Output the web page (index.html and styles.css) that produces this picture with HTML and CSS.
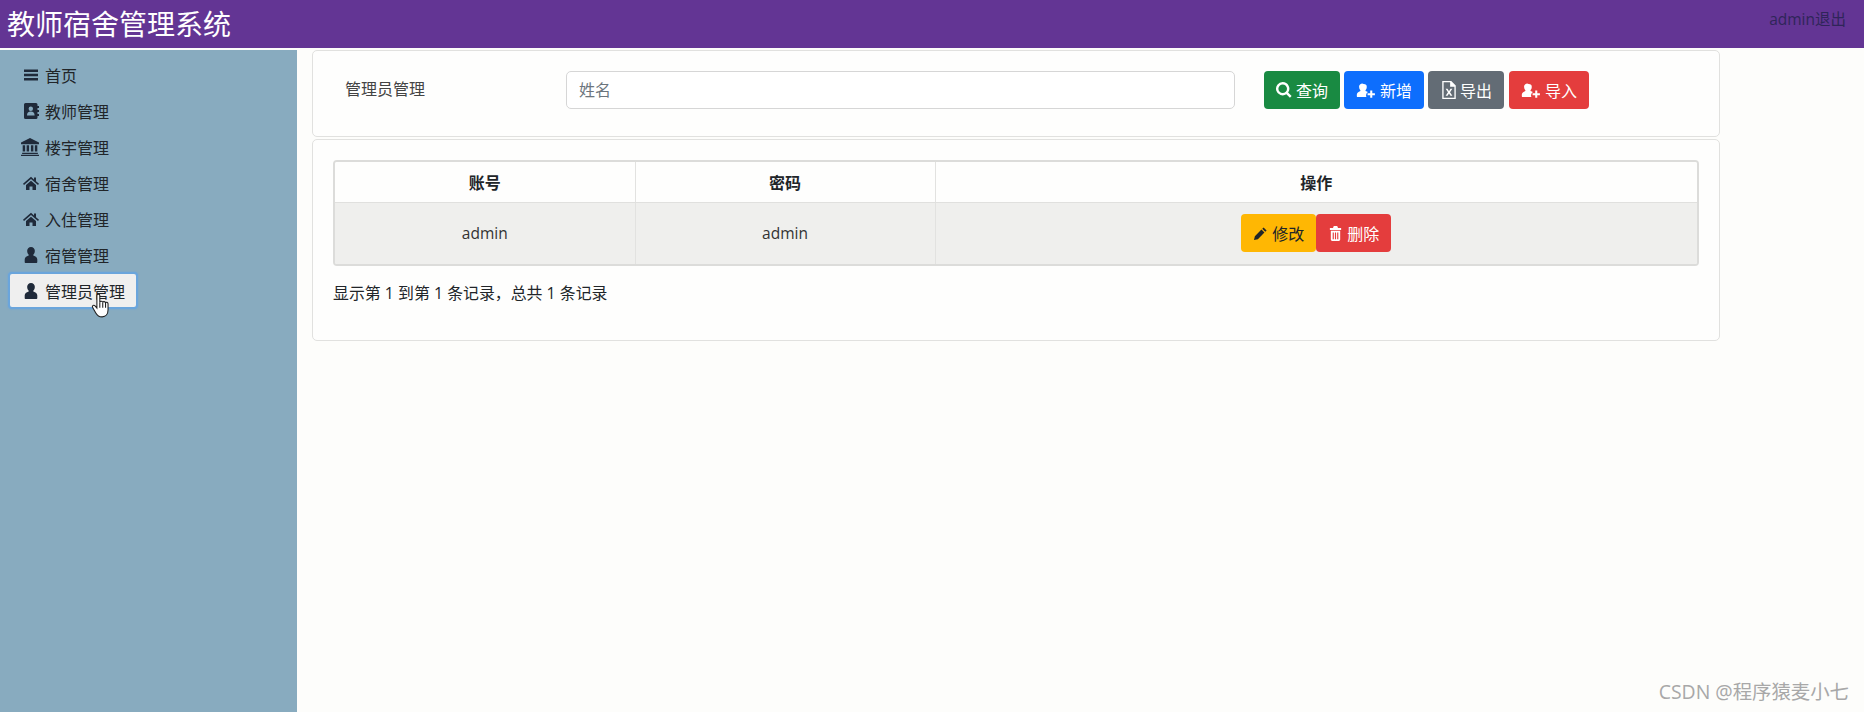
FILE: index.html
```html
<!DOCTYPE html>
<html lang="zh-CN">
<head>
    <meta charset="UTF-8">
    <title>教师宿舍管理系统</title>
    <link rel="stylesheet" href="styles.css">
</head>
<body>
    <svg class="icon-defs" width="0" height="0">
        <symbol id="i-menu" viewBox="0 0 16 16"><path d="M1 2.500h14v2.400H1zM1 6.800h14v2.400H1zM1 11.100h14v2.400H1z"/></symbol>
        <symbol id="i-book" viewBox="0 0 16 16"><path fill-rule="evenodd" d="M2.500 0H13a1.500 1.500 0 0 1 1.500 1.500V3H16v2h-1.500v2H16v2h-1.500v2H16v2h-1.500v1.500A1.500 1.500 0 0 1 13 16H2.500A1.500 1.500 0 0 1 1 14.500v-13A1.500 1.500 0 0 1 2.500 0zM7.800 3.500a2.200 2.200 0 1 0 0 4.400 2.200 2.200 0 0 0 0-4.400zM4 12.500h7.600c0-2.600-1.300-4-3.800-4S4 9.900 4 12.500z"/></symbol>
        <symbol id="i-bank" viewBox="0 0 16 16"><path d="M8 0l8 4v1.500H0V4zM1.500 6.500h2.200v5.500H1.500zM5 6.500h2.200v5.500H5zM8.800 6.500H11v5.500H8.800zM12.300 6.500h2.200v5.500h-2.200zM1 13h14v1.300H1zM0 14.800h16V16H0z"/></symbol>
        <symbol id="i-home" viewBox="0 0 16 16"><path d="M8 1.800L0 8.800l1 1.100L8 4l7 5.900 1-1.100-3-2.600V2.500h-2v2zM3 10l5-4.200 5 4.200v5H9.500v-3.500h-3V15H3z"/></symbol>
        <symbol id="i-user" viewBox="0 0 16 16"><path d="M8 0a3.800 3.800 0 0 1 3.800 4.200c0 1.500-.7 2.800-1.500 3.500v.8c2.500.7 4 2 4 4V15c0 .6-.5 1-1 1H2.700c-.6 0-1-.4-1-1v-2.500c0-2 1.500-3.300 4-4v-.8c-.8-.7-1.500-2-1.500-3.500A3.800 3.800 0 0 1 8 0z"/></symbol>
        <symbol id="i-search" viewBox="0 0 16 16"><path fill-rule="evenodd" d="M6.700 0a6.700 6.700 0 0 1 5.400 10.600l3.500 3.500-1.700 1.700-3.500-3.500A6.700 6.700 0 1 1 6.700 0zm0 2.400a4.300 4.300 0 1 0 0 8.600 4.300 4.300 0 0 0 0-8.600z"/></symbol>
        <symbol id="i-user-add" viewBox="0 0 20 16"><path d="M7.500 1a3.300 3.300 0 0 1 3.300 3.600c0 1.300-.6 2.400-1.300 3v.8c1 .3 1.900.7 2.500 1.200a4.500 4.500 0 0 0-1.500 5.400H1.200c-.6 0-1-.4-1-1v-1.600c0-1.900 1.700-3.200 3.800-4v-.8c-.7-.6-1.300-1.700-1.300-3A3.300 3.300 0 0 1 7.500 1zM14.500 8h2.200v2.800h2.800V13h-2.800v2.800h-2.200V13h-2.800v-2.200h2.800z"/></symbol>
        <symbol id="i-excel" viewBox="0 0 16 16"><path fill-rule="evenodd" d="M2 0h8l4 4v12H2zM3.200 1.200v13.600h9.600V5H9V1.200zM5 6.800h1.700L8 9l1.300-2.200H11L8.900 10l2.100 3.200H9.300L8 11l-1.300 2.200H5L7.100 10z"/></symbol>
        <symbol id="i-pencil" viewBox="0 0 16 16"><path d="M11.300 1.500l3.200 3.200-1.400 1.400-3.200-3.200zM9 3.800L12.200 7l-7 7-4.200 1 1-4.200z"/></symbol>
        <symbol id="i-trash" viewBox="0 0 16 16"><path fill-rule="evenodd" d="M5.500 1.500C5.500.7 6.200 0 7 0h2c.8 0 1.500.7 1.500 1.500V2H14v2.200H2V2h3.500zM3 5h10v9.500c0 .8-.7 1.500-1.500 1.500h-7C3.700 16 3 15.300 3 14.500zm2 1.800v7.400h1.200V6.800zm2.400 0v7.400h1.200V6.800zm2.400 0v7.400H11V6.800z"/></symbol>
    </svg>

    <header class="topbar">
        <div class="brand">教师宿舍管理系统</div>
        <div class="top-user">admin退出</div>
    </header>

    <div class="layout">
        <nav class="sidebar">
            <a class="nav-item"><svg class="nav-icon"><use href="#i-menu"/></svg>首页</a>
            <a class="nav-item"><svg class="nav-icon"><use href="#i-book"/></svg>教师管理</a>
            <a class="nav-item"><svg class="nav-icon big"><use href="#i-bank"/></svg>楼宇管理</a>
            <a class="nav-item"><svg class="nav-icon"><use href="#i-home"/></svg>宿舍管理</a>
            <a class="nav-item"><svg class="nav-icon"><use href="#i-home"/></svg>入住管理</a>
            <a class="nav-item"><svg class="nav-icon"><use href="#i-user"/></svg>宿管管理</a>
            <a class="nav-item active"><svg class="nav-icon"><use href="#i-user"/></svg>管理员管理
                <svg class="hand-cursor" viewBox="0 0 18 24">
                    <path d="M5.200 2.300c0-1.700 2.700-1.700 2.700 0v6.200c.3-1.300 2.500-1.300 2.700.2.300-1.100 2.400-1 2.600.4.500-.9 2.300-.6 2.300.9v5.500c0 3.300-1.800 6.500-5.500 6.500-3 0-4.500-1.200-5.800-3.600L1.300 13.300c-.9-1.500 1-2.700 2.200-1.400l1.700 2z" fill="#fff" stroke="#222" stroke-width="1"/>
                    <path d="M7.900 8.500v5M10.600 8.700v4.800M13.200 9.100v4.400" fill="none" stroke="#222" stroke-width="1"/>
                </svg>
            </a>
        </nav>

        <main class="content">
            <section class="panel search-panel">
                <div class="search-title">管理员管理</div>
                <input class="search-input" type="text" placeholder="姓名">
                <div class="btn-group">
                    <button class="btn btn-green"><svg class="btn-icon search"><use href="#i-search"/></svg>查询</button>
                    <button class="btn btn-blue"><svg class="btn-icon wide"><use href="#i-user-add"/></svg>新增</button>
                    <button class="btn btn-gray"><svg class="btn-icon file"><use href="#i-excel"/></svg>导出</button>
                    <button class="btn btn-red"><svg class="btn-icon wide"><use href="#i-user-add"/></svg>导入</button>
                </div>
            </section>

            <section class="panel table-panel">
                <div class="table-wrap">
                    <table class="data-table">
                        <thead>
                            <tr>
                                <th class="col-a">账号</th>
                                <th class="col-b">密码</th>
                                <th>操作</th>
                            </tr>
                        </thead>
                        <tbody>
                            <tr>
                                <td>admin</td>
                                <td>admin</td>
                                <td>
                                    <div class="row-actions">
                                        <button class="btn btn-yellow"><svg class="btn-icon"><use href="#i-pencil"/></svg>修改</button>
                                        <button class="btn btn-red"><svg class="btn-icon"><use href="#i-trash"/></svg>删除</button>
                                    </div>
                                </td>
                            </tr>
                        </tbody>
                    </table>
                </div>
                <div class="table-info">显示第 1 到第 1 条记录，总共 1 条记录</div>
            </section>
        </main>
    </div>

    <div class="watermark">CSDN @程序猿麦小七</div>
</body>
</html>
```

FILE: styles.css
```css
:root {
    --purple: #633594;
    --side-bg: #88abbf;
    --page-bg: #fdfdfb;
    --line: #e1e1df;
    --text: #212529;
}

* {
    box-sizing: border-box;
}

body {
    margin: 0;
    height: 712px;
    overflow: hidden;
    background-color: var(--page-bg);
    color: var(--text);
    font-family: "Open Sans", "Noto Sans CJK SC", sans-serif;
    font-size: 16px;
}

.icon-defs {
    display: block;
    position: absolute;
}

.topbar {
    display: flex;
    justify-content: space-between;
    height: 50px;
    padding: 0 18px 0 7px;
    background-color: var(--purple);
    border-bottom: 2px solid #fdfdfb;
}

.brand {
    color: #fff;
    font-size: 28px;
    line-height: 48px;
}

.top-user {
    padding-top: 9px;
    color: #2f2559;
    font-size: 15.500px;
    line-height: 20px;
}

.layout {
    display: flex;
    height: 662px;
}

.sidebar {
    display: flex;
    flex-direction: column;
    align-items: flex-start;
    width: 297px;
    padding-top: 7px;
    background-color: var(--side-bg);
}

.nav-item {
    display: flex;
    align-items: center;
    position: relative;
    height: 36px;
    margin-left: 9px;
    padding: 0 11px 0 14px;
}

.nav-icon {
    width: 16px;
    height: 16px;
    margin-right: 6px;
    fill: #1f2a3a;
}

.nav-icon.big {
    width: 18px;
    height: 18px;
    margin-left: -2px;
    margin-right: 6px;
}

.nav-item.active {
    height: 37px;
    margin-top: -1px;
    margin-left: 8px;
    background-color: #efefef;
    border: 2px solid #6aa5dc;
    border-radius: 4px;
    padding: 0 11px 0 13px;
    box-shadow: 0 0 2px #6aa5dc;
}

.hand-cursor {
    position: absolute;
    left: 81px;
    top: 19px;
    width: 20px;
    height: 26px;
}

.content {
    width: 1408px;
    margin-left: 15px;
}

.panel {
    border: 1px solid var(--line);
    border-radius: 5px;
    background-color: #fefefd;
}

.search-panel {
    display: flex;
    align-items: flex-start;
    height: 87px;
    padding: 20px 0 0 32px;
}

.search-title {
    width: 221px;
    color: #444;
    line-height: 37px;
}

.search-input {
    width: 669px;
    height: 38px;
    padding: 0 12px;
    border: 1px solid #d6d6d6;
    border-radius: 5px;
    background-color: #fff;
    font-family: inherit;
    font-size: 16px;
}

.search-input::placeholder {
    color: #6c757d;
}

.btn-group {
    display: flex;
    gap: 4px;
    margin-left: 29px;
}

.btn-group .btn:last-child {
    margin-left: 1px;
}

.btn {
    display: inline-flex;
    align-items: center;
    justify-content: center;
    height: 38px;
    padding: 0 12px;
    border: 0;
    border-radius: 4px;
    color: #fff;
    font-family: inherit;
    font-size: 16px;
    white-space: nowrap;
}

.btn-icon {
    width: 15px;
    height: 15px;
    margin-right: 4px;
    fill: currentColor;
}

.btn-icon.search {
    width: 16px;
    height: 16px;
    margin-right: 4px;
}

.btn-icon.file {
    width: 18px;
    height: 18px;
    margin-right: 2px;
}

.btn-icon.wide {
    width: 20px;
    margin-right: 4px;
}

.btn-green {
    background-color: #198a42;
}

.btn-blue {
    background-color: #0d6efd;
}

.btn-gray {
    background-color: #636c75;
}

.btn-red {
    background-color: #e43d3d;
}

.btn-yellow {
    background-color: #ffb703;
    color: #212529;
}

.table-panel {
    height: 202px;
    margin-top: 2px;
    padding: 20px 20px 0;
}

.table-wrap {
    width: 1366px;
    border: 2px solid #dcdcda;
    border-radius: 4px;
    overflow: hidden;
}

.data-table {
    width: 100%;
    border-collapse: collapse;
    table-layout: fixed;
    text-align: center;
}

.data-table th {
    height: 40px;
    border-bottom: 1px solid #e0e0de;
    background-color: #fefefd;
    font-weight: 700;
}

.data-table td {
    height: 62px;
    padding: 0;
    background-color: #efefed;
    color: #333;
    font-size: 15.500px;
}

.data-table th + th,
.data-table td + td {
    border-left: 1px solid #e2e2e0;
}

.col-a {
    width: 300px;
}

.col-b {
    width: 300px;
}

.row-actions {
    display: flex;
    justify-content: center;
}

.table-info {
    margin-top: 16px;
    font-size: 15.900px;
    line-height: 22px;
}

.watermark {
    position: absolute;
    right: 15px;
    bottom: 8px;
    color: #a8a8a8;
    font-size: 19.400px;
    line-height: 24px;
}
```
